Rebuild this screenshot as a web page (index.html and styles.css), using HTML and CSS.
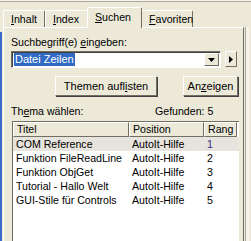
FILE: index.html
```html
<!DOCTYPE html>
<html lang="de">
<head>
    <meta charset="UTF-8">
    <title>Suchen</title>
    <link rel="stylesheet" href="styles.css">
</head>
<body>
    <div class="window">
        <div class="topline"></div>
        <div class="tabs">
            <div class="tab"><u>I</u>nhalt</div>
            <div class="tab"><u>I</u>ndex</div>
            <div class="tab active"><u>S</u>uchen</div>
            <div class="tab"><u>F</u>avoriten</div>
        </div>
        <div class="main">
            <div class="strip"></div>
            <div class="panel">
                <div class="label">Suchbegriff(e) <u>e</u>ingeben:</div>
                <div class="search-row">
                    <div class="combo">
                        <span class="selected-text">Datei Zeilen</span>
                        <div class="drop-btn">
                            <svg width="7" height="4" viewBox="0 0 7 4"><path d="M0 0h7L3.5 4z" fill="#000"/></svg>
                        </div>
                    </div>
                    <div class="arrow-btn">
                        <svg width="4" height="7" viewBox="0 0 4 7"><path d="M0 0v7L4 3.5z" fill="#000"/></svg>
                    </div>
                </div>
                <div class="button-row">
                    <button class="btn btn-list">Themen aufl<u>i</u>sten</button>
                    <button class="btn btn-show">An<u>z</u>eigen</button>
                </div>
                <div class="info-row">
                    <span class="choose">Th<u>e</u>ma wählen:</span>
                    <span>Gefunden: 5</span>
                </div>
                <div class="listbox">
                    <div class="row header">
                        <div class="head">Titel</div>
                        <div class="head">Position</div>
                        <div class="head">Rang</div>
                    </div>
                    <div class="row item selected">
                        <div>COM Reference</div><div>AutoIt-Hilfe</div><div class="rank">1</div>
                    </div>
                    <div class="row item">
                        <div>Funktion FileReadLine</div><div>AutoIt-Hilfe</div><div>2</div>
                    </div>
                    <div class="row item">
                        <div>Funktion ObjGet</div><div>AutoIt-Hilfe</div><div>3</div>
                    </div>
                    <div class="row item">
                        <div>Tutorial - Hallo Welt</div><div>AutoIt-Hilfe</div><div>4</div>
                    </div>
                    <div class="row item">
                        <div>GUI-Stile für Controls</div><div>AutoIt-Hilfe</div><div>5</div>
                    </div>
                </div>
            </div>
            <div class="edge"></div>
        </div>
    </div>
</body>
</html>
```

FILE: styles.css
```css
body {
    margin: 0;
    background-color: #ece9d8;
    font-family: "Liberation Sans", Arial, sans-serif;
    font-size: 10.6px;
    color: #000000;
    overflow: hidden;
}
u {
    text-decoration: underline;
}
.window {
    width: 251px;
    height: 241px;
    display: flex;
    flex-direction: column;
    overflow: hidden;
}
.topline {
    height: 3px;
    border-bottom: 1px solid #aca899;
    background-color: #f4f3ee;
}
.tabs {
    display: flex;
    align-items: flex-end;
    padding-left: 3px;
    margin-top: 5px;
    height: 21px;
}
.tab {
    height: 17px;
    line-height: 17px;
    padding: 0 7px;
    border-top: 1px solid #ffffff;
    border-left: 1px solid #ffffff;
    border-right: 1px solid #716f64;
    border-radius: 2px 2px 0 0;
    box-sizing: border-box;
}
.tab:nth-child(1) { width: 42px; }
.tab:nth-child(2) { width: 43px; }
.tab:nth-child(4) { width: 52px; }
.tab.active {
    height: 21px;
    width: 55px;
    margin-left: -1px;
    margin-right: -1px;
    line-height: 19px;
    padding-bottom: 2px;
    position: relative;
    z-index: 1;
    background-color: #ece9d8;
    margin-bottom: -1px;
}
.main {
    flex: 1;
    display: flex;
}
.strip {
    width: 2px;
    margin-top: 5px;
    background-color: #3a6bc9;
}
.panel {
    width: 241px;
    margin-left: 1px;
    border-top: 1px solid #ffffff;
    border-left: 1px solid #ffffff;
    border-right: 1px solid #716f64;
    box-sizing: border-box;
    padding: 8px 0 0 7px;
}
.edge {
    width: 3px;
    margin-left: 1px;
    border-left: 1px solid #aca899;
    background-color: #f4f3ee;
}
.label {
    height: 13px;
    line-height: 13px;
}
.search-row {
    display: flex;
    margin-top: 2px;
    height: 17px;
}
.combo {
    width: 210px;
    background-color: #ffffff;
    border-top: 1px solid #716f64;
    border-left: 1px solid #716f64;
    border-right: 1px solid #ffffff;
    border-bottom: 1px solid #ffffff;
    box-shadow: inset 1px 1px 0 #404040;
    box-sizing: border-box;
    display: flex;
    align-items: center;
    padding: 0 1px 0 2px;
}
.selected-text {
    background-color: #316ac5;
    color: #ffffff;
    padding: 0 1px;
    line-height: 13px;
    font-size: 11px;
}
.drop-btn, .arrow-btn {
    background-color: #ece9d8;
    border-top: 1px solid #ffffff;
    border-left: 1px solid #ffffff;
    border-right: 1px solid #716f64;
    border-bottom: 1px solid #716f64;
    box-sizing: border-box;
    display: flex;
    align-items: center;
    justify-content: center;
}
.drop-btn {
    margin-left: auto;
    width: 15px;
    height: 13px;
}
.arrow-btn {
    width: 12px;
    height: 16px;
    margin-left: 4px;
}
.button-row {
    display: flex;
    margin-top: 8px;
    padding-left: 44px;
    gap: 26px;
}
.btn {
    height: 20px;
    font-family: "Liberation Sans", Arial, sans-serif;
    font-size: 11px;
    background-color: #ece9d8;
    border-top: 1px solid #ffffff;
    border-left: 1px solid #ffffff;
    border-right: 1px solid #716f64;
    border-bottom: 1px solid #716f64;
    box-shadow: 1px 1px 0 #404040;
    padding: 0;
    margin: 0;
}
.btn-list { width: 102px; }
.btn-show { width: 55px; }
.info-row {
    display: flex;
    margin-top: 9px;
    height: 12px;
    line-height: 12px;
}
.choose {
    width: 144px;
}
.listbox {
    margin-top: 4px;
    margin-left: 1px;
    width: 227px;
    height: 120px;
    background-color: #ffffff;
    border-top: 1px solid #716f64;
    border-left: 1px solid #716f64;
    box-sizing: border-box;
}
.row {
    display: grid;
    grid-template-columns: 116px 75px 33px;
}
.head {
    height: 15px;
    line-height: 13px;
    padding-left: 3px;
    background-color: #ece9d8;
    border-top: 1px solid #ffffff;
    border-left: 1px solid #ffffff;
    border-right: 1px solid #716f64;
    border-bottom: 1px solid #716f64;
    box-sizing: border-box;
    white-space: nowrap;
}
.item {
    height: 14px;
    line-height: 14px;
}
.item div {
    padding-left: 3px;
    white-space: nowrap;
}
.selected {
    background-color: #e6e4dc;
}
.rank {
    color: #3a2a86;
}
```
